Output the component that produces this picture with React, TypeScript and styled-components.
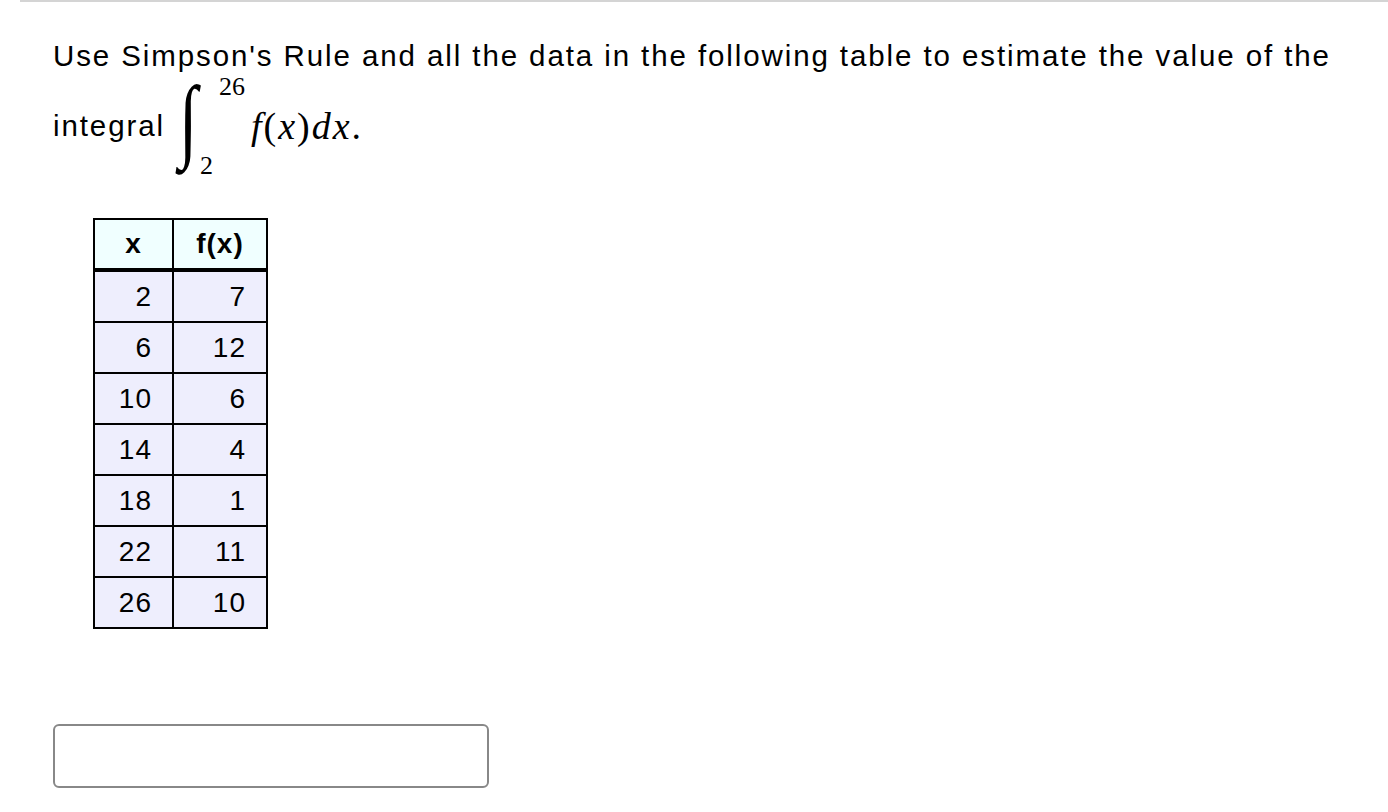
import styled, { createGlobalStyle } from "styled-components";

const GlobalStyle = createGlobalStyle`
  body {
    margin: 0;
    background: #ffffff;
    font-family: "Liberation Sans", Arial, Helvetica, sans-serif;
    color: #000;
  }
`;

const Page = styled.div`
  width: 1388px;
`;

const TopRule = styled.div`
  margin-left: 20px;
  height: 2px;
  background: #d4d4d4;
`;

const Content = styled.div`
  padding: 0 53px;
`;

const Question = styled.p`
  margin: 36px 0 0;
  font-size: 29.5px;
  letter-spacing: 1.9px;
  line-height: 36px;
  white-space: nowrap;
`;

const IntegralLine = styled.div`
  display: flex;
  align-items: center;
  height: 100px;
  margin-top: 2px;
  font-size: 29.5px;
  letter-spacing: 1.9px;
`;

const IntegralBlock = styled.span`
  display: inline-flex;
  align-items: center;
  margin-left: 12px;
  letter-spacing: 0;
  font-family: "Liberation Serif", "DejaVu Serif", serif;
`;

const IntegralSign = styled.span`
  position: relative;
  display: inline-block;
  width: 62px;
  height: 100px;
`;

const Sign = styled.span`
  position: absolute;
  left: 2px;
  top: 1px;
  font-family: "Liberation Serif", serif;
  font-size: 84px;
  line-height: 84px;
  transform: scale(0.8, 1.1);
  transform-origin: left center;
`;

const Limit = styled.span<{ $upper?: boolean }>`
  position: absolute;
  font-size: 26px;
  line-height: 1;
  ${(p) => (p.$upper ? "top: -2px; left: 42px;" : "bottom: -3px; left: 23px;")}
`;

const MathText = styled.span`
  margin-left: 12px;
  font-family: "Liberation Serif", "DejaVu Serif", serif;
  font-style: italic;
  font-size: 38px;
  letter-spacing: 2px;
`;

const Upright = styled.span`
  font-style: normal;
`;

const Table = styled.table`
  margin: 42px 0 0 40px;
  border-collapse: collapse;
  font-size: 28px;
  letter-spacing: 1px;
`;

const HeadCell = styled.th<{ $w: number }>`
  width: ${(p) => p.$w}px;
  height: 48px;
  padding: 0;
  border: 2px solid #000;
  border-bottom: 4px solid #000;
  background: #f0ffff;
  font-weight: bold;
  text-align: center;
`;

const Cell = styled.td`
  height: 49px;
  padding: 0 20px 0 0;
  border: 2px solid #000;
  background: #eeeefd;
  text-align: right;
`;

const AnswerBox = styled.input`
  display: block;
  box-sizing: border-box;
  margin-top: 95px;
  width: 436px;
  height: 64px;
  border: 2px solid #888;
  border-radius: 6px;
  background: #fff;
  outline: none;
  font-size: 24px;
  padding: 0 12px;
`;

const rows: [number, number][] = [
  [2, 7],
  [6, 12],
  [10, 6],
  [14, 4],
  [18, 1],
  [22, 11],
  [26, 10],
];

export default function App() {
  return (
    <Page>
      <GlobalStyle />
      <TopRule />
      <Content>
        <Question>
          Use Simpson's Rule and all the data in the following table to estimate the value of the
        </Question>
        <IntegralLine>
          integral
          <IntegralBlock>
            <IntegralSign>
              <Sign>∫</Sign>
              <Limit $upper>26</Limit>
              <Limit>2</Limit>
            </IntegralSign>
            <MathText>
              f<Upright>(</Upright>x<Upright>)</Upright>dx<Upright>.</Upright>
            </MathText>
          </IntegralBlock>
        </IntegralLine>
        <Table>
          <thead>
            <tr>
              <HeadCell $w={77}>x</HeadCell>
              <HeadCell $w={92}>f(x)</HeadCell>
            </tr>
          </thead>
          <tbody>
            {rows.map(([x, fx]) => (
              <tr key={x}>
                <Cell>{x}</Cell>
                <Cell>{fx}</Cell>
              </tr>
            ))}
          </tbody>
        </Table>
        <AnswerBox type="text" />
      </Content>
    </Page>
  );
}
